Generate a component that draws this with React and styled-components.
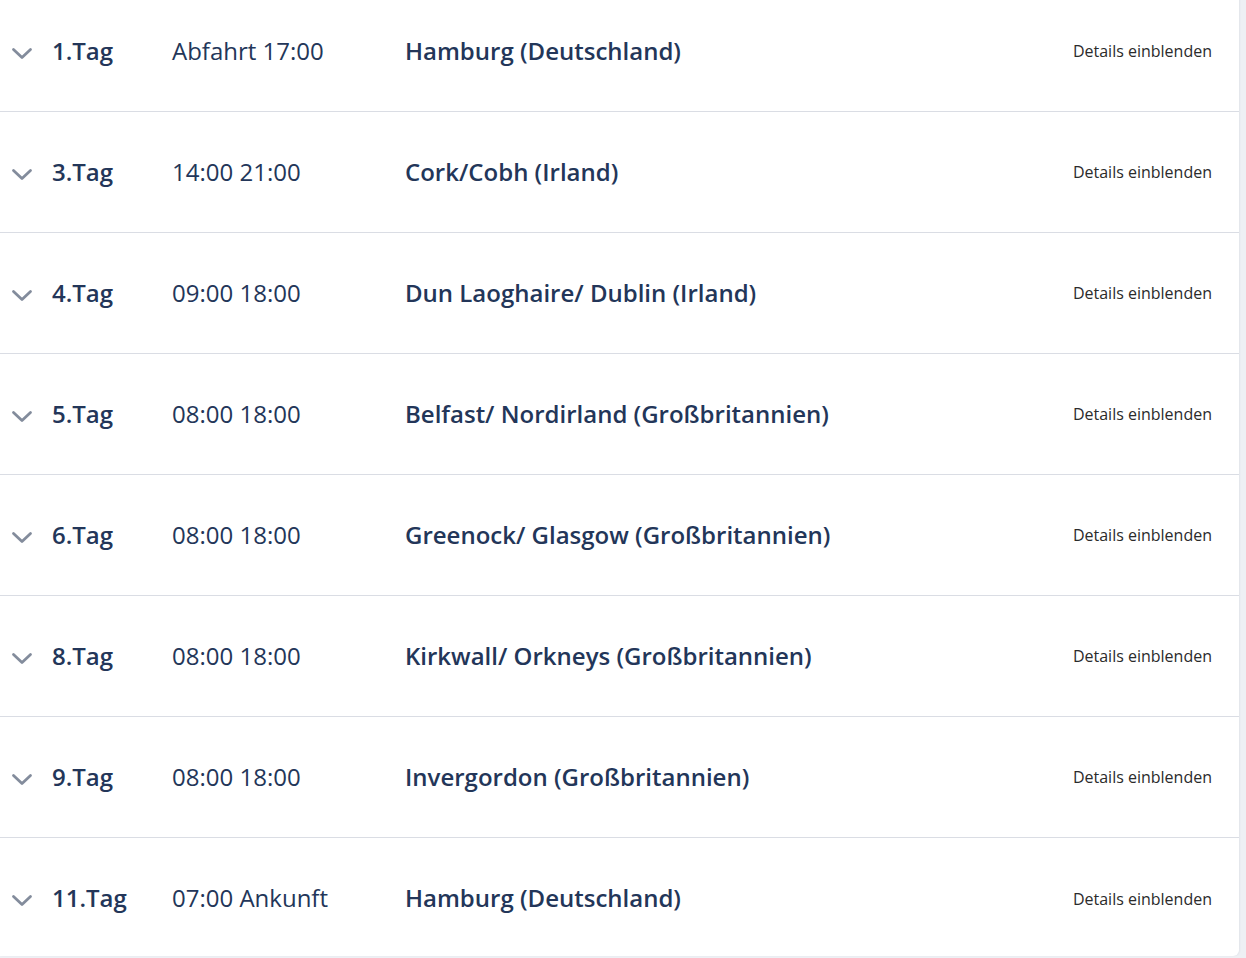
import React from 'react'
import styled, { createGlobalStyle } from 'styled-components'

const stops = [
    { day: '1.Tag', time: 'Abfahrt 17:00', place: 'Hamburg (Deutschland)' },
    { day: '3.Tag', time: '14:00 21:00', place: 'Cork/Cobh (Irland)' },
    { day: '4.Tag', time: '09:00 18:00', place: 'Dun Laoghaire/ Dublin (Irland)' },
    { day: '5.Tag', time: '08:00 18:00', place: 'Belfast/ Nordirland (Großbritannien)' },
    { day: '6.Tag', time: '08:00 18:00', place: 'Greenock/ Glasgow (Großbritannien)' },
    { day: '8.Tag', time: '08:00 18:00', place: 'Kirkwall/ Orkneys (Großbritannien)' },
    { day: '9.Tag', time: '08:00 18:00', place: 'Invergordon (Großbritannien)' },
    { day: '11.Tag', time: '07:00 Ankunft', place: 'Hamburg (Deutschland)' },
]

function Chevron() {
    return (
        <svg width="22" height="13" viewBox="0 0 22 13" fill="none">
            <polyline points="2.5,2.5 11,10.5 19.5,2.5" stroke="#838c9c" strokeWidth="2.8" strokeLinecap="round" strokeLinejoin="round" />
        </svg>
    )
}

function App() {
    return (
        <>
            <GlobalStyle />
            <Page>
                <Card>
                    {stops.map((s, i) => (
                        <Row key={i} last={i === stops.length - 1}>
                            <Toggle><Chevron /></Toggle>
                            <Day>{s.day}</Day>
                            <Time>{s.time}</Time>
                            <Place>{s.place}</Place>
                            <DetailsLink>Details einblenden</DetailsLink>
                        </Row>
                    ))}
                </Card>
            </Page>
        </>
    )
}

export default App

const GlobalStyle = createGlobalStyle`
    html, body {
        margin: 0;
        padding: 0;
        background: #eef0f4;
        font-family: "Open Sans", "Noto Sans", sans-serif;
        overflow: hidden;
    }
`

const Page = styled.div`
    width: 1246px;
    height: 958px;
    overflow: hidden;
    padding-right: 7px;
    box-sizing: border-box;
`

const Card = styled.div`
    background: #ffffff;
    margin-top: -9px;
    height: 965px;
    border-bottom-right-radius: 6px;
    box-shadow: 1px 0 2px rgba(30, 45, 80, 0.06);
`

const Row = styled.div`
    display: grid;
    grid-template-columns: 52px 120px 233px 1fr auto;
    align-items: center;
    height: 121px;
    padding-right: 27px;
    border-bottom: ${p => (p.last ? 'none' : '1px solid #dadde4')};
    box-sizing: border-box;
`

const Toggle = styled.div`
    display: flex;
    align-items: center;
    padding-left: 11px;
    padding-top: 4px;
`

const Day = styled.div`
    font-size: 24px;
    font-weight: 600;
    color: #233659;
    padding-bottom: 2px;
`

const Time = styled(Day)`
    font-weight: 400;
`

const Place = styled(Day)``

const DetailsLink = styled.div`
    font-size: 16px;
    color: #2b2b2b;
    cursor: pointer;
`
